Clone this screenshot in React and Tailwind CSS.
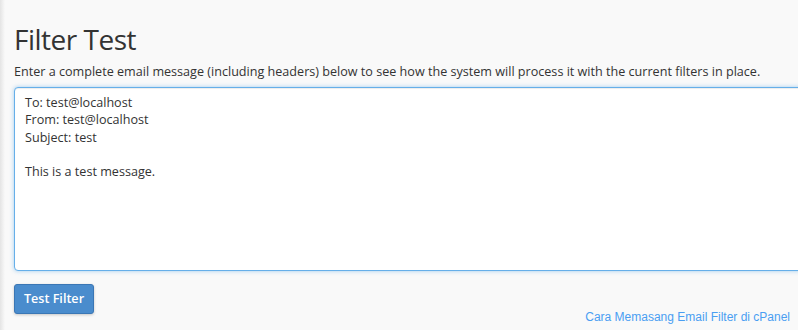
export default function App() {
  return (
    <div className="w-[798px] h-[330px] overflow-hidden bg-[#f9f9f9] flex" style={{ fontFamily: '"Open Sans", sans-serif' }}>
      <div className="w-[5px] shrink-0 bg-gradient-to-r from-[#e4e4e4] to-[#f9f9f9]" />
      <div className="flex-1 pl-[9px] flex flex-col min-w-0">
        <h1 className="mt-[21px] text-[28px] leading-[36px] tracking-[-0.5px] text-[#333] font-normal whitespace-nowrap">Filter Test</h1>
        <p className="mt-[6px] text-[12.6px] leading-[18px] text-[#333] whitespace-nowrap">
          Enter a complete email message (including headers) below to see how the system will process it with the current filters in place.
        </p>
        <div className="mt-[6px] w-[800px] h-[184px] shrink-0 bg-white border border-[#66afe9] rounded-[4px] shadow-[inset_0_1px_1px_rgba(0,0,0,0.075),0_0_4px_rgba(102,175,233,0.6)] px-[10px] pt-[6px] text-[12.6px] leading-[17.3px] text-[#333]">
          <div>To: test@localhost</div>
          <div>From: test@localhost</div>
          <div>Subject: test</div>
          <div>&nbsp;</div>
          <div>This is a test message.</div>
        </div>
        <div className="mt-[13px] flex items-end justify-between pr-[8px]">
          <button className="w-[80px] h-[30px] bg-[#4a8ccd] border border-[#3b77b5] rounded-[3px] text-white text-[12.6px] font-semibold shadow-[0_1px_3px_rgba(0,0,0,0.2)]">
            Test Filter
          </button>
          <a className="text-[12px] leading-[16px] text-[#4a9ef2] mb-[-11px] whitespace-nowrap" style={{ fontFamily: '"Liberation Sans", Arial, sans-serif' }}>
            Cara Memasang Email Filter di cPanel
          </a>
        </div>
      </div>
    </div>
  );
}
